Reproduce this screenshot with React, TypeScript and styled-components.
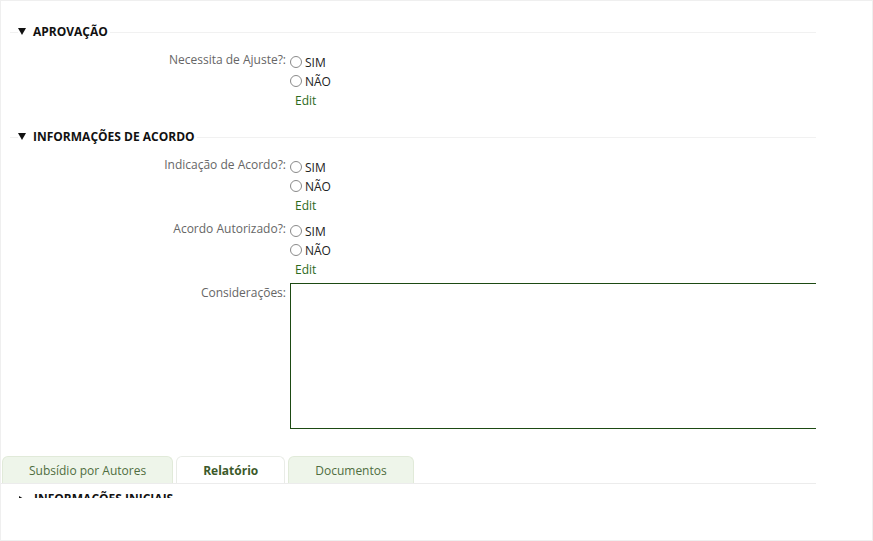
import React from "react";
import styled, { createGlobalStyle } from "styled-components";

const GlobalStyle = createGlobalStyle`
  html, body { margin: 0; padding: 0; background: #ffffff; }
  body { font-family: "Open Sans", "Noto Sans", sans-serif; font-size: 12px; color: #222; }
  * { box-sizing: border-box; }
`;

const Frame = styled.div`
  width: 873px;
  height: 541px;
  border: 1px solid #efefef;
  overflow: hidden;
  background: #fff;
`;

const Viewport = styled.div`
  width: 815px;
  height: 497px;
  overflow: hidden;
  padding-top: 21px;
`;

const Section = styled.section<{ $gapTop?: number }>`
  margin: ${(p) => p.$gapTop ?? 0}px 0 0 9px;
`;

const SectionHeader = styled.div`
  display: flex;
  align-items: center;
  height: 19px;
  &::before {
    content: "";
    width: 8px;
    border-top: 1px solid #f1f1f1;
    margin-top: 2px;
  }
  &::after {
    content: "";
    flex: 1;
    border-top: 1px solid #f1f1f1;
    margin-top: 2px;
    margin-left: 2px;
  }
`;

const Arrow = styled.svg`
  display: block;
  flex: none;
  margin-right: 7px;
`;

const Title = styled.span`
  font-weight: 700;
  font-size: 12px;
  color: #111;
  letter-spacing: 0;
  line-height: 19px;
  white-space: nowrap;
`;

const Fields = styled.div`
  display: flex;
  flex-direction: column;
  gap: 4px;
  padding-top: 9px;
`;

const FieldRow = styled.div`
  display: grid;
  grid-template-columns: 276px 1fr;
  column-gap: 4px;
  align-items: start;
`;

const Label = styled.div`
  text-align: right;
  color: #666;
  font-size: 12px;
  line-height: 19px;
  white-space: nowrap;
`;

const Options = styled.div`
  display: flex;
  flex-direction: column;
  padding-top: 3px;
`;

const Option = styled.label`
  display: flex;
  align-items: center;
  height: 19px;
  font-size: 12px;
  color: #222;
  line-height: 19px;
`;

const Radio = styled.input`
  appearance: none;
  -webkit-appearance: none;
  width: 12px;
  height: 12px;
  margin: 0 3px 0 0;
  border: 1px solid #8a8a8a;
  border-radius: 50%;
  background: #fff;
  transform: translateY(-1px);
`;

const EditLink = styled.a`
  display: block;
  height: 19px;
  line-height: 19px;
  padding-left: 5px;
  color: #2c6a1c;
  font-size: 12px;
  text-decoration: none;
`;

const TextArea = styled.textarea`
  display: block;
  width: 560px;
  height: 146px;
  border: 1px solid #1d4a13;
  border-radius: 0;
  resize: none;
  font-family: inherit;
  outline: none;
`;

const Tabs = styled.div`
  display: flex;
  gap: 3px;
  margin-top: 27px;
  padding-left: 1px;
  border-bottom: 1px solid #ececec;
`;

const Tab = styled.div<{ $active?: boolean }>`
  height: 27px;
  padding: 0 26px;
  display: flex;
  align-items: center;
  justify-content: center;
  border: 1px solid ${(p) => (p.$active ? "#e9ece7" : "#e1ead9")};
  border-bottom: none;
  border-radius: 6px 6px 0 0;
  background: ${(p) => (p.$active ? "#ffffff" : "#eef5ea")};
  color: ${(p) => (p.$active ? "#3c5a2a" : "#4f6d40")};
  font-weight: ${(p) => (p.$active ? 700 : 400)};
  font-size: 12px;
  white-space: nowrap;
`;

const CollapsedHeader = styled.div`
  display: flex;
  align-items: center;
  height: 19px;
  margin: 5px 0 0 9px;
  padding-left: 9px;
`;

const Down = () => (
  <Arrow width="8" height="7" viewBox="0 0 8 7">
    <path d="M0 0 H8 L4 7 Z" fill="#111" />
  </Arrow>
);

const Right = () => (
  <Arrow width="5" height="6" viewBox="0 0 5 6" style={{ marginRight: 10 }}>
    <path d="M0 0 L5 3 L0 6 Z" fill="#111" />
  </Arrow>
);

type RadioFieldProps = { label: string; name: string };

const RadioField = ({ label, name }: RadioFieldProps) => (
  <FieldRow>
    <Label>{label}</Label>
    <Options>
      <Option>
        <Radio type="radio" name={name} />
        SIM
      </Option>
      <Option>
        <Radio type="radio" name={name} />
        NÃO
      </Option>
      <EditLink href="#">Edit</EditLink>
    </Options>
  </FieldRow>
);

export default function App() {
  return (
    <>
      <GlobalStyle />
      <Frame>
        <Viewport>
          <Section>
            <SectionHeader>
              <Down />
              <Title>APROVAÇÃO</Title>
            </SectionHeader>
            <Fields>
              <RadioField label="Necessita de Ajuste?:" name="ajuste" />
            </Fields>
          </Section>
          <Section $gapTop={17}>
            <SectionHeader>
              <Down />
              <Title>INFORMAÇÕES DE ACORDO</Title>
            </SectionHeader>
            <Fields>
              <RadioField label="Indicação de Acordo?:" name="indicacao" />
              <RadioField label="Acordo Autorizado?:" name="autorizado" />
              <FieldRow>
                <Label>Considerações:</Label>
                <TextArea />
              </FieldRow>
            </Fields>
          </Section>
          <Tabs>
            <Tab>Subsídio por Autores</Tab>
            <Tab $active>Relatório</Tab>
            <Tab>Documentos</Tab>
          </Tabs>
          <CollapsedHeader>
            <Right />
            <Title>INFORMAÇÕES INICIAIS</Title>
          </CollapsedHeader>
        </Viewport>
      </Frame>
    </>
  );
}
